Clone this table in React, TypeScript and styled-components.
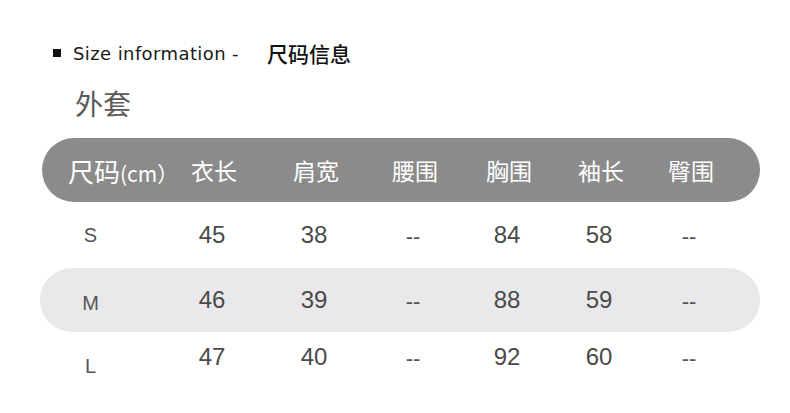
import React from "react";
import styled, { createGlobalStyle } from "styled-components";

const GlobalStyle = createGlobalStyle`
  body {
    margin: 0;
    background: #ffffff;
    font-family: "Liberation Sans", "Noto Sans CJK SC", sans-serif;
  }
`;

const Page = styled.div`
  width: 790px;
  height: 413px;
  padding-top: 38px;
  box-sizing: border-box;
  overflow: hidden;
`;

const TitleRow = styled.div`
  display: flex;
  align-items: center;
  height: 30px;
  padding-left: 53px;
`;

const Bullet = styled.span`
  width: 8px;
  height: 8px;
  background: #111111;
  margin-right: 12px;
`;

const TitleEn = styled.span`
  font-family: "DejaVu Sans", sans-serif;
  font-size: 18px;
  color: #1a1a1a;
  letter-spacing: 0.4px;
`;

const TitleZh = styled.span`
  font-family: "Noto Sans CJK SC", sans-serif;
  font-size: 21px;
  font-weight: 500;
  color: #111111;
  margin-left: 28px;
`;

const Category = styled.div`
  font-family: "Noto Sans CJK SC", sans-serif;
  font-size: 28px;
  color: #5a5a5a;
  padding-left: 75px;
  margin-top: 15px;
  height: 40px;
  line-height: 40px;
`;

const Table = styled.div`
  margin-left: 40px;
  width: 720px;
  margin-top: 15px;
`;

const cols = "121px 102px 102px 96px 92px 92px 88px";

const HeaderBar = styled.div`
  display: grid;
  grid-template-columns: ${cols};
  align-items: center;
  height: 64px;
  margin-left: 2px;
  border-radius: 32px;
  background: #8b8b8b;
  color: #ffffff;
  font-family: "Noto Sans CJK SC", sans-serif;
  font-size: 23px;
`;

const HeadCell = styled.div<{ $first?: boolean }>`
  text-align: ${(p) => (p.$first ? "left" : "center")};
  padding-left: ${(p) => (p.$first ? "26px" : "0")};
  white-space: nowrap;
`;

const HeadMain = styled.span`
  font-size: 26px;
`;

const HeadUnit = styled.span`
  font-size: 21px;
`;

const Row = styled.div<{ $shaded?: boolean; $h: number }>`
  display: grid;
  grid-template-columns: ${cols};
  align-items: center;
  height: ${(p) => p.$h}px;
  border-radius: 32px;
  background: ${(p) => (p.$shaded ? "#e9e9eb" : "transparent")};
  color: #4a4a4a;
  font-size: 24px;
`;

const SizeCell = styled.div<{ $shift: number }>`
  text-align: center;
  padding-right: 20px;
  font-size: 20px;
  color: #555555;
  transform: translateY(${(p) => p.$shift}px);
`;

const Cell = styled.div<{ $dash?: boolean }>`
  text-align: center;
  font-size: ${(p) => (p.$dash ? "22px" : "24px")};
  color: ${(p) => (p.$dash ? "#555555" : "#4a4a4a")};
  transform: translateY(${(p) => (p.$dash ? "2px" : "0")});
`;

const headers = ["衣长", "肩宽", "腰围", "胸围", "袖长", "臀围"];

const rows = [
  { size: "S", h: 66, shift: 0, values: ["45", "38", "--", "84", "58", "--"] },
  { size: "M", h: 64, shift: 3, values: ["46", "39", "--", "88", "59", "--"] },
  { size: "L", h: 50, shift: 9, values: ["47", "40", "--", "92", "60", "--"] },
];

export default function App() {
  return (
    <Page>
      <GlobalStyle />
      <TitleRow>
        <Bullet />
        <TitleEn>Size information -</TitleEn>
        <TitleZh>尺码信息</TitleZh>
      </TitleRow>
      <Category>外套</Category>
      <Table>
        <HeaderBar>
          <HeadCell $first>
            <HeadMain>尺码</HeadMain>
            <HeadUnit>(cm）</HeadUnit>
          </HeadCell>
          {headers.map((h) => (
            <HeadCell key={h}>{h}</HeadCell>
          ))}
        </HeaderBar>
        {rows.map((r, i) => (
          <Row key={r.size} $h={r.h} $shaded={i === 1}>
            <SizeCell $shift={r.shift}>{r.size}</SizeCell>
            {r.values.map((v, j) => (
              <Cell key={j} $dash={v === "--"}>
                {v}
              </Cell>
            ))}
          </Row>
        ))}
      </Table>
    </Page>
  );
}
